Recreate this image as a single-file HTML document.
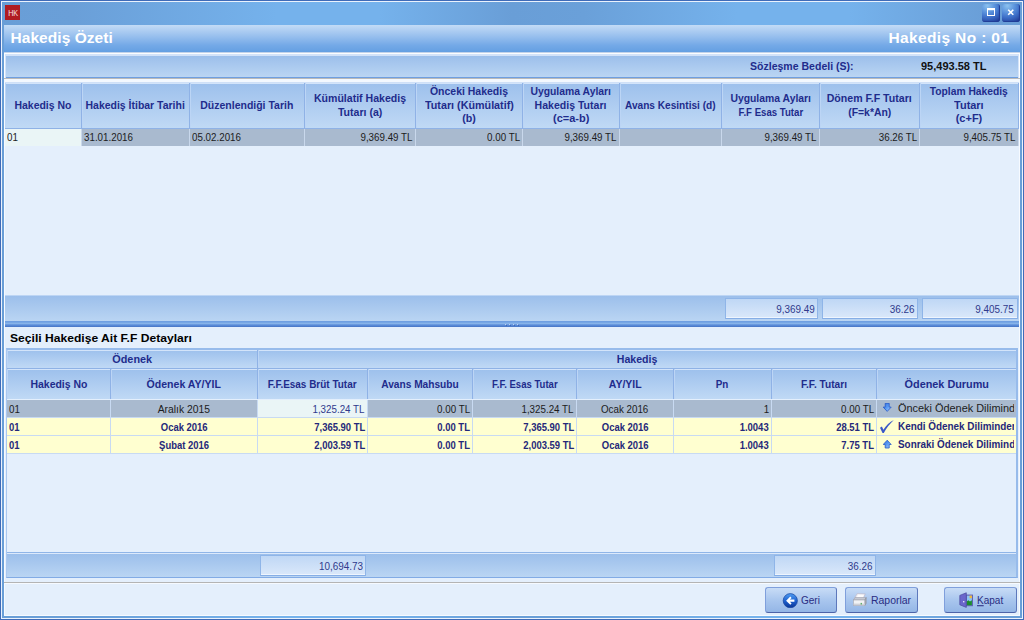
<!DOCTYPE html>
<html lang="tr">
<head>
<meta charset="utf-8">
<title>Hakediş Özeti</title>
<style>
html,body{margin:0;padding:0;}
body{width:1024px;height:620px;overflow:hidden;position:relative;background:#6ea8e3;font-family:"Liberation Sans",sans-serif;font-size:11px;color:#1c1c1c;}
.abs{position:absolute;}
#win{position:absolute;left:0;top:0;width:1022px;height:618px;border:1px solid #3f6bb8;background:linear-gradient(90deg,#699ed7 0%,#6a9fd8 7%,#75b2ec 27%,#75b2ec 37%,#699ed7 50%,#6aa0d9 57%,#75b2ec 72%,#75b2ec 83%,#6a9fd8 96%,#699ed7 100%);}
#winin{position:absolute;left:1px;top:1px;width:1022px;height:618px;border:1px solid #eaf2fd;box-sizing:border-box;}
#content{position:absolute;left:4px;top:25px;width:1016px;height:591px;background:#e4effc;box-sizing:border-box;border:1px solid #f6faff;border-top:none;}
#icon{position:absolute;left:5.4px;top:5.3px;width:14.5px;height:14.6px;background:#b01c22;color:#f6e4e4;font-size:9px;line-height:16.4px;text-align:center;overflow:hidden;}
#icon span{display:inline-block;transform:scale(.8,1);letter-spacing:-0.3px;}
.wbtn{position:absolute;top:4px;width:18px;height:18px;border-radius:3px;background:radial-gradient(ellipse 110% 100% at 30% 10%,#8cc2ee 0%,#5e96de 35%,#3d6fc8 65%,#22409b 100%);box-sizing:border-box;box-shadow:inset -1px -1px 1px #213c96;}
#hdr{position:absolute;left:4px;top:25px;width:1016px;height:27px;background:linear-gradient(#c3dbf6 0%,#9fc4ef 35%,#74a9e7 75%,#649fe2 100%);}
#hdr .t1{position:absolute;left:6.5px;top:4px;letter-spacing:0.05px;font-size:15.5px;font-weight:bold;color:#fff;line-height:18px;white-space:nowrap;}
#hdr .t2{position:absolute;right:10.7px;top:4px;letter-spacing:0.36px;font-size:15.5px;font-weight:bold;color:#fff;line-height:18px;white-space:nowrap;}
.panel{position:absolute;background:linear-gradient(#9cbfeb,#bad5f3);}
.hcell{position:absolute;display:flex;align-items:center;justify-content:center;text-align:center;font-weight:bold;color:#1f2c8c;font-size:11px;line-height:13.75px;box-sizing:border-box;border-right:1px solid #8fb2e6;border-left:1px solid #bcd5f5;box-shadow:inset 0 1px 0 #d3e4fa;background:linear-gradient(#9dc0ec,#c0d9f5);white-space:nowrap;}
.cell{position:absolute;height:18px;line-height:18px;box-sizing:border-box;white-space:nowrap;font-size:11px;overflow:hidden;}
.r{text-align:right;padding-right:2px;}
.l{text-align:left;padding-left:1.5px;}
.c{text-align:center;}
.g{background:#a9bacf;}
.y{background:#ffffd0;font-weight:bold;color:#25287a;}
.fbox{position:absolute;box-sizing:border-box;border:1px solid #8fb5e8;border-bottom-color:#86aee6;background:linear-gradient(#bfd7f5,#dae8fa);box-shadow:inset 0 -1px 0 #eef5fe;text-align:right;padding-right:2px;font-size:11px;color:#2f3a8c;}
.btn{position:absolute;top:587px;height:26px;box-sizing:border-box;border:1px solid #7f9fdc;border-bottom-color:#4d63a8;border-right-color:#5d78bc;border-radius:3px;background:linear-gradient(#c8dcf6,#a9c6ee 50%,#94b6e6);font-size:11px;color:#2a2d82;line-height:24px;white-space:nowrap;}
.w{background:#eaf5f6;}
.fc{color:#2f3a8c;}
.t{display:inline-block;white-space:nowrap;}
.hcell .t{transform:scale(.957,1.04);transform-origin:center;}
.hcell.s1{padding-top:1px;}
.hcell{padding-right:1px;}
.hcell.h2{padding-top:1.5px;}
.hcell.hb{padding-top:1px;}
.cell.r2{padding-top:0.5px;}

.cell .t{transform:scale(.89,1.04);}
.cell.y .t{transform:scale(.86,1.04);}
.bt{transform:scale(.91,1.04);transform-origin:left center;}
.fbox .t{transform:scale(.9,1.04);transform-origin:right center;}
.cell.m .t{transform:scale(.94,1.04);}
.cell.st .t{transform:scale(.992,1.04);}
.cell.st.y .t{transform:scale(.9,1.04);}
.cell.r .t{transform-origin:right center;}
.cell.l .t{transform-origin:left center;}
.cell.c .t{transform-origin:center;}
.ic{position:absolute;left:4px;top:4px;}
</style>
</head>
<body>
<div id="win"></div>
<div id="winin"></div>
<div id="icon"><span>HK</span></div>
<div class="wbtn" style="left:982px"><svg width="18" height="18" viewBox="0 0 18 18" style="position:absolute;left:0;top:0"><rect x="5.5" y="4.5" width="7" height="7" fill="none" stroke="#fff" stroke-width="1"/><rect x="5" y="4" width="8" height="2.2" fill="#fff"/></svg></div>
<div class="wbtn" style="left:1002px"><svg width="18" height="18" viewBox="0 0 18 18" style="position:absolute;left:0;top:0"><path d="M6.2 5.7 L11.3 10.8 M11.3 5.7 L6.2 10.8" stroke="#fff" stroke-width="1.6" fill="none"/></svg></div>
<div id="content"></div>
<div id="hdr"><div class="t1">Hakediş Özeti</div><div class="t2">Hakediş No : 01</div></div>

<!-- top panel -->
<div class="abs" style="left:4px;top:52px;width:1016px;height:1px;background:#c3d3ea;"></div>
<div class="abs" style="left:4px;top:53px;width:1016px;height:26px;background:#d3e3f9;box-sizing:border-box;border:1px solid #fbfdff;border-bottom:none;"></div>
<div class="panel" style="left:6px;top:56px;width:1012px;height:21px;"></div>
<div class="abs" style="left:6px;top:77px;width:1012px;height:1px;background:#6f9fe0;"></div>
<div class="abs" style="left:4px;top:78px;width:1016px;height:1px;background:#b9b9b9;"></div>
<div class="abs" style="left:750px;top:60px;font-size:11px;font-weight:bold;color:#1f2c8c;line-height:13px;white-space:nowrap;transform:scale(.957,1.04);transform-origin:left center;">Sözleşme Bedeli (S):</div>
<div class="abs" style="left:921px;top:60px;font-size:11px;font-weight:bold;color:#111;line-height:13px;white-space:nowrap;transform:scale(1,1.04);">95,493.58 TL</div>

<!-- grid 1 -->
<div id="g1">
<div class="abs" style="left:4px;top:79px;width:1016px;height:3px;background:#f3f8fe;"></div>
<div class="abs" style="left:5px;top:82px;width:1014px;height:1px;background:#cfe0f7;"></div>
<div class="abs" style="left:5px;top:83px;width:1014px;height:45px;background:#8fb2e6;"></div>
<div class="hcell s1" style="left:5px;top:83px;width:77px;height:45px;"><div><span class="t" style="transform:scale(0.953,1.04)">Hakediş No</span></div></div>
<div class="hcell s1" style="left:82px;top:83px;width:108px;height:45px;"><div><span class="t" style="transform:scale(0.952,1.04)">Hakediş İtibar Tarihi</span></div></div>
<div class="hcell s1" style="left:190px;top:83px;width:115px;height:45px;"><div><span class="t" style="transform:scale(0.954,1.04)">Düzenlendiği Tarih</span></div></div>
<div class="hcell" style="left:305px;top:83px;width:111px;height:45px;"><div><span class="t" style="transform:scale(0.96,1.04)">Kümülatif Hakediş</span><br><span class="t" style="transform:scale(0.959,1.04)">Tutarı (a)</span></div></div>
<div class="hcell" style="left:416px;top:83px;width:107px;height:45px;"><div><span class="t" style="transform:scale(0.953,1.04)">Önceki Hakediş</span><br><span class="t" style="transform:scale(0.978,1.04)">Tutarı (Kümülatif)</span><br><span class="t" style="transform:scale(0.968,1.04)">(b)</span></div></div>
<div class="hcell" style="left:523px;top:83px;width:97px;height:45px;"><div><span class="t" style="transform:scale(0.944,1.04)">Uygulama Ayları</span><br><span class="t" style="transform:scale(0.958,1.04)">Hakediş Tutarı</span><br><span class="t" style="transform:scale(0.999,1.04)">(c=a-b)</span></div></div>
<div class="hcell s1" style="left:620px;top:83px;width:102px;height:45px;"><div><span class="t" style="transform:scale(0.919,1.04)">Avans Kesintisi (d)</span></div></div>
<div class="hcell" style="left:722px;top:83px;width:98px;height:45px;"><div><span class="t" style="transform:scale(0.944,1.04)">Uygulama Ayları</span><br><span class="t" style="transform:scale(0.876,1.04)">F.F Esas Tutar</span></div></div>
<div class="hcell" style="left:820px;top:83px;width:100px;height:45px;"><div><span class="t" style="transform:scale(0.962,1.04)">Dönem F.F Tutarı</span><br><span class="t" style="transform:scale(0.947,1.04)">(F=k*An)</span></div></div>
<div class="hcell" style="left:920px;top:83px;width:99px;height:45px;"><div><span class="t" style="transform:scale(0.935,1.04)">Toplam Hakediş</span><br><span class="t" style="transform:scale(0.995,1.04)">Tutarı</span><br><span class="t" style="transform:scale(1.0,1.04)">(c+F)</span></div></div>
<div class="abs" style="left:5px;top:128px;width:1014px;height:1px;background:#8fb2e6;"></div>
<div class="abs" style="left:5px;top:129px;width:1014px;height:17px;background:#c9d8ec;"></div>
<div class="cell l w" style="left:5px;top:129px;width:76px;height:17px;line-height:17px;"><span class="t">01</span></div>
<div class="cell l g" style="left:82px;top:129px;width:107px;height:17px;line-height:17px;"><span class="t">31.01.2016</span></div>
<div class="cell l g" style="left:190px;top:129px;width:114px;height:17px;line-height:17px;"><span class="t">05.02.2016</span></div>
<div class="cell r g" style="left:305px;top:129px;width:110px;height:17px;line-height:17px;"><span class="t">9,369.49 TL</span></div>
<div class="cell r g" style="left:416px;top:129px;width:106px;height:17px;line-height:17px;"><span class="t">0.00 TL</span></div>
<div class="cell r g" style="left:523px;top:129px;width:96px;height:17px;line-height:17px;"><span class="t">9,369.49 TL</span></div>
<div class="cell r g" style="left:620px;top:129px;width:101px;height:17px;line-height:17px;"><span class="t"></span></div>
<div class="cell r g" style="left:722px;top:129px;width:97px;height:17px;line-height:17px;"><span class="t">9,369.49 TL</span></div>
<div class="cell r g" style="left:820px;top:129px;width:99px;height:17px;line-height:17px;"><span class="t">36.26 TL</span></div>
<div class="cell r g" style="left:920px;top:129px;width:98px;height:17px;line-height:17px;"><span class="t">9,405.75 TL</span></div>
<div class="abs" style="left:5px;top:295px;width:1014px;height:1px;background:#bdd5f4;"></div>
<div class="panel" style="left:5px;top:296px;width:1014px;height:25px;"></div>
<div class="fbox" style="left:725px;top:298px;width:93px;height:21px;line-height:20px;"><span class="t">9,369.49</span></div>
<div class="fbox" style="left:822px;top:298px;width:96px;height:21px;line-height:20px;"><span class="t">36.26</span></div>
<div class="fbox" style="padding-right:3px;left:922px;top:298px;width:96px;height:21px;line-height:20px;"><span class="t">9,405.75</span></div>
<div class="abs" style="left:5px;top:321px;width:1014px;height:6px;background:linear-gradient(#6c9ce0 0%,#74a4e4 22%,#8ab6ea 40%,#6b9be0 58%,#4f80d0 82%,#4876c6 100%);"></div>
<div class="abs" style="left:505px;top:324px;width:1px;height:1px;background:#bdd2f2;box-shadow:1px 1px 0 #4068b8;"></div>
<div class="abs" style="left:509px;top:324px;width:1px;height:1px;background:#bdd2f2;box-shadow:1px 1px 0 #4068b8;"></div>
<div class="abs" style="left:513px;top:324px;width:1px;height:1px;background:#bdd2f2;box-shadow:1px 1px 0 #4068b8;"></div>
<div class="abs" style="left:517px;top:324px;width:1px;height:1px;background:#bdd2f2;box-shadow:1px 1px 0 #4068b8;"></div>
</div>
<!-- grid 2 -->
<div id="g2">
<div class="abs" style="left:10px;top:331px;font-size:11px;font-weight:bold;color:#000;line-height:14px;white-space:nowrap;transform:scale(1.1,1.04);transform-origin:left center;" id="sec">Seçili Hakedişe Ait F.F Detayları</div>
<div class="abs" style="left:6px;top:348px;width:1012px;height:230px;box-sizing:border-box;border:1px solid #a9c7f0;border-top:2px solid #97bbeb;border-right:2px solid #97bbeb;border-bottom-color:#82abe5;background:#e4effc;"></div>
<div class="abs" style="left:7px;top:350px;width:1009px;height:49px;background:#8fb2e6;"></div>
<div class="hcell hb" style="left:7px;top:350px;width:251px;height:18px;"><div><span class="t" style="transform:scale(0.986,1.04)">Ödenek</span></div></div>
<div class="hcell hb" style="left:258px;top:350px;width:758px;height:18px;border-right:none;"><div><span class="t" style="transform:scale(0.962,1.04)">Hakediş</span></div></div>
<div class="hcell h2" style="left:7px;top:369px;width:104px;height:30px;"><div><span class="t" style="transform:scale(0.953,1.04)">Hakediş No</span></div></div>
<div class="hcell h2" style="left:111px;top:369px;width:147px;height:30px;"><div><span class="t" style="transform:scale(0.96,1.04)">Ödenek AY/YIL</span></div></div>
<div class="hcell h2" style="left:258px;top:369px;width:110px;height:30px;"><div><span class="t" style="transform:scale(0.905,1.04)">F.F.Esas Brüt Tutar</span></div></div>
<div class="hcell h2" style="left:368px;top:369px;width:105px;height:30px;"><div><span class="t" style="transform:scale(0.924,1.04)">Avans Mahsubu</span></div></div>
<div class="hcell h2" style="left:473px;top:369px;width:104px;height:30px;"><div><span class="t" style="transform:scale(0.868,1.04)">F.F. Esas Tutar</span></div></div>
<div class="hcell h2" style="left:577px;top:369px;width:97px;height:30px;"><div><span class="t" style="transform:scale(0.953,1.04)">AY/YIL</span></div></div>
<div class="hcell h2" style="left:674px;top:369px;width:98px;height:30px;"><div><span class="t" style="transform:scale(0.896,1.04)">Pn</span></div></div>
<div class="hcell h2" style="left:772px;top:369px;width:105px;height:30px;"><div><span class="t" style="transform:scale(0.923,1.04)">F.F. Tutarı</span></div></div>
<div class="hcell h2" style="left:877px;top:369px;width:139px;height:30px;border-right:none;"><div><span class="t" style="transform:scale(0.986,1.04)">Ödenek Durumu</span></div></div>
<div class="abs" style="left:7px;top:400px;width:1009px;height:54px;background:#c8daf2;"></div>
<div class="cell r2 l g" style="left:7px;top:400px;width:103px;height:17px;line-height:17px;"><span class="t">01</span></div>
<div class="cell r2 c m g" style="left:111px;top:400px;width:146px;height:17px;line-height:17px;"><span class="t">Aralık 2015</span></div>
<div class="cell r2 r w fc" style="left:258px;top:400px;width:109px;height:17px;line-height:17px;"><span class="t">1,325.24 TL</span></div>
<div class="cell r2 r g" style="left:368px;top:400px;width:104px;height:17px;line-height:17px;"><span class="t">0.00 TL</span></div>
<div class="cell r2 r g" style="left:473px;top:400px;width:103px;height:17px;line-height:17px;"><span class="t">1,325.24 TL</span></div>
<div class="cell r2 c g" style="left:577px;top:400px;width:96px;height:17px;line-height:17px;"><span class="t">Ocak 2016</span></div>
<div class="cell r2 r g" style="left:674px;top:400px;width:97px;height:17px;line-height:17px;"><span class="t">1</span></div>
<div class="cell r2 r g" style="left:772px;top:400px;width:104px;height:17px;line-height:17px;"><span class="t">0.00 TL</span></div>
<div class="cell r2 l st g" style="left:877px;top:400px;width:139px;height:17px;line-height:17px;"><svg class="ic" style="left:5.5px;top:3.4px" width="9" height="9" viewBox="0 0 9 9"><defs><linearGradient id="ga" x1="0" y1="0" x2="1" y2="1"><stop offset="0" stop-color="#2f6fe0"/><stop offset="0.5" stop-color="#5a9af2"/><stop offset="1" stop-color="#b5d5fc"/></linearGradient></defs><path d="M2.2 0.3h4v3.8h2L4.2 8.4 0.2 4.1h2z" fill="url(#ga)" stroke="#2458c8" stroke-width="0.8"/></svg><span style="position:absolute;left:0;top:0;width:137px;height:17px;overflow:hidden;"><span class="t" style="position:absolute;left:21px;top:0">Önceki Ödenek Diliminden</span></span></div>
<div class="cell r2 l y" style="left:7px;top:418px;width:103px;height:17px;line-height:17px;"><span class="t">01</span></div>
<div class="cell r2 c y" style="left:111px;top:418px;width:146px;height:17px;line-height:17px;"><span class="t">Ocak 2016</span></div>
<div class="cell r2 r y" style="left:258px;top:418px;width:109px;height:17px;line-height:17px;"><span class="t">7,365.90 TL</span></div>
<div class="cell r2 r y" style="left:368px;top:418px;width:104px;height:17px;line-height:17px;"><span class="t">0.00 TL</span></div>
<div class="cell r2 r y" style="left:473px;top:418px;width:103px;height:17px;line-height:17px;"><span class="t">7,365.90 TL</span></div>
<div class="cell r2 c y" style="left:577px;top:418px;width:96px;height:17px;line-height:17px;"><span class="t">Ocak 2016</span></div>
<div class="cell r2 r y" style="left:674px;top:418px;width:97px;height:17px;line-height:17px;"><span class="t">1.0043</span></div>
<div class="cell r2 r y" style="left:772px;top:418px;width:104px;height:17px;line-height:17px;"><span class="t">28.51 TL</span></div>
<div class="cell r2 l st y" style="left:877px;top:418px;width:139px;height:17px;line-height:17px;"><svg class="ic" style="left:3.4px;top:2px" width="14" height="13" viewBox="0 0 14 13"><path d="M0 7.8L1.9 6.5 3.4 9.8C6 5.6 9.6 2 13.8 0 10 3.6 6.2 8.4 3.8 12.9H2.5z" fill="#3a58c8"/></svg><span style="position:absolute;left:0;top:0;width:137px;height:17px;overflow:hidden;"><span class="t" style="position:absolute;left:21px;top:0">Kendi Ödenek Diliminden</span></span></div>
<div class="cell r2 l y" style="left:7px;top:436px;width:103px;height:17px;line-height:17px;"><span class="t">01</span></div>
<div class="cell r2 c y" style="left:111px;top:436px;width:146px;height:17px;line-height:17px;"><span class="t">Şubat 2016</span></div>
<div class="cell r2 r y" style="left:258px;top:436px;width:109px;height:17px;line-height:17px;"><span class="t">2,003.59 TL</span></div>
<div class="cell r2 r y" style="left:368px;top:436px;width:104px;height:17px;line-height:17px;"><span class="t">0.00 TL</span></div>
<div class="cell r2 r y" style="left:473px;top:436px;width:103px;height:17px;line-height:17px;"><span class="t">2,003.59 TL</span></div>
<div class="cell r2 c y" style="left:577px;top:436px;width:96px;height:17px;line-height:17px;"><span class="t">Ocak 2016</span></div>
<div class="cell r2 r y" style="left:674px;top:436px;width:97px;height:17px;line-height:17px;"><span class="t">1.0043</span></div>
<div class="cell r2 r y" style="left:772px;top:436px;width:104px;height:17px;line-height:17px;"><span class="t">7.75 TL</span></div>
<div class="cell r2 l st y" style="left:877px;top:436px;width:139px;height:17px;line-height:17px;"><svg class="ic" style="left:5.5px;top:3.6px" width="9" height="9" viewBox="0 0 9 9"><path d="M4.2 0.2L8.2 4.5h-2v3.5h-4V4.5h-2z" fill="url(#ga)" stroke="#2458c8" stroke-width="0.8"/></svg><span style="position:absolute;left:0;top:0;width:137px;height:17px;overflow:hidden;"><span class="t" style="position:absolute;left:21px;top:0">Sonraki Ödenek Diliminden</span></span></div>
<div class="abs" style="left:7px;top:552px;width:1009px;height:1px;background:#8fb5e8;"></div>
<div class="abs" style="left:7px;top:553px;width:1009px;height:1px;background:#dce9fb;"></div>
<div class="panel" style="left:7px;top:554px;width:1009px;height:23px;"></div>
<div class="fbox" style="left:260px;top:555px;width:106px;height:21px;line-height:20px;"><span class="t">10,694.73</span></div>
<div class="fbox" style="left:774px;top:555px;width:102px;height:21px;line-height:20px;"><span class="t">36.26</span></div>
<div class="abs" style="left:4px;top:582px;width:1016px;height:1px;background:#b4b4b4;"></div>
<div class="abs" style="left:4px;top:583px;width:1016px;height:1px;background:#f6faff;"></div>
<div class="btn" style="left:765px;width:72px;"><svg class="abs" style="left:15.5px;top:4px" width="16" height="16" viewBox="0 0 16 16"><defs><linearGradient id="gc" x1="0" y1="0" x2="0" y2="1"><stop offset="0" stop-color="#4f9df2"/><stop offset="0.5" stop-color="#1f62d0"/><stop offset="1" stop-color="#0a3596"/></linearGradient></defs><circle cx="8.3" cy="8.7" r="7.1" fill="url(#gc)" stroke="#123f9c" stroke-width="0.7"/><path d="M12.4 7.6H7.9L9.6 5.9 8.3 4.6 4.1 8.7l4.2 4.1 1.3-1.3L7.9 9.8h4.5z" fill="#fff"/></svg><span class="abs bt" style="left:34.5px;top:0">Geri</span></div>
<div class="btn" style="left:845px;width:73px;"><svg class="abs" style="left:7px;top:5px" width="15" height="14" viewBox="0 0 15 14"><path d="M4.2 0.6L12.3 0.9 10.6 4.8H1.6z" fill="#e9e9ef" stroke="#b9b3c6" stroke-width="0.6"/><path d="M5 1.6l6 .2-1.1 2.4H3.7z" fill="#fbfbfd"/><path d="M0.4 7L2 4.6h11.2L11.8 7z" fill="#c9ccd4" stroke="#9a9ca6" stroke-width="0.5"/><path d="M11.8 7l1.4-2.4v5.6l-1.4 2.3z" fill="#a9acb6" stroke="#8a8c96" stroke-width="0.5"/><rect x="0.4" y="7" width="11.4" height="5.5" fill="#f1f2f5" stroke="#a2a4ae" stroke-width="0.6"/><rect x="0.8" y="10.6" width="10.6" height="1.6" fill="#cfd1d8"/><rect x="7.7" y="9.9" width="1" height="1.6" fill="#2a9a3a"/></svg><span class="abs bt" style="left:25px;top:0;transform:scale(.95,1.04)">Raporlar</span></div>
<div class="btn" style="left:944px;width:73px;"><svg class="abs" style="left:14px;top:4px" width="15" height="16" viewBox="0 0 15 16"><rect x="7.2" y="3.1" width="6.2" height="10.6" fill="#8cc3f2" stroke="#5a58b0" stroke-width="1"/><path d="M7.7 9.6l1.6-1.4 1.7 1.3 1.9-1.2V13.2H7.7z" fill="#1d8c2c"/><rect x="10.6" y="3.6" width="2.3" height="2.6" fill="#f2b83a"/><path d="M0.8 3.4L7.3 0.8v14.6L0.8 12.8z" fill="#6a66cc" stroke="#4a479c" stroke-width="0.7"/><rect x="4" y="9.2" width="1.4" height="1.1" fill="#fff"/></svg><span class="abs bt" style="left:32px;top:0"><u>K</u>apat</span></div>
</div>
</body>
</html>
